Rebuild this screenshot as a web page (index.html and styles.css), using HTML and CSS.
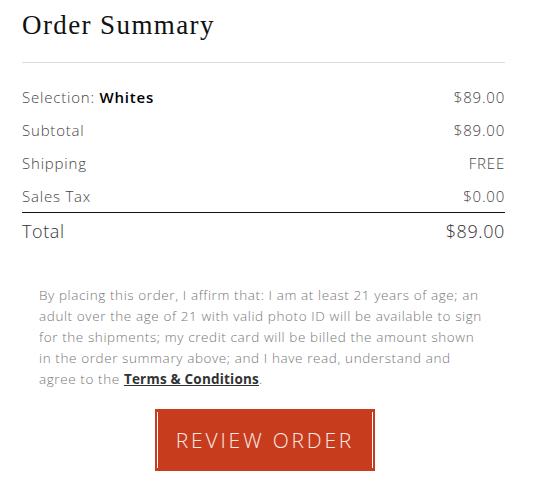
FILE: index.html
```html
<!DOCTYPE html>
<html>
<head>
<meta charset="utf-8">
<link rel="stylesheet" href="styles.css">
</head>
<body>
<div class="summary">
  <h1 class="title">Order Summary</h1>
  <div class="rows">
    <div class="row"><span>Selection: <b class="sel">Whites</b></span><span>$89.00</span></div>
    <div class="row"><span>Subtotal</span><span>$89.00</span></div>
    <div class="row"><span>Shipping</span><span>FREE</span></div>
    <div class="row"><span>Sales Tax</span><span>$0.00</span></div>
    <div class="row total"><span>Total</span><span>$89.00</span></div>
  </div>
  <p class="legal">By placing this order, I affirm that: I am at least 21 years of age; an adult over the age of 21 with valid photo ID will be available to sign for the shipments; my credit card will be billed the amount shown in the order summary above; and I have read, understand and agree to the <a class="terms" href="#">Terms &amp; Conditions</a>.</p>
  <div class="actions">
    <button class="review">REVIEW ORDER</button>
  </div>
</div>
</body>
</html>
```
FILE: styles.css
```css
* { box-sizing: border-box; }
body {
  margin: 0;
  background: #fff;
  font-family: "Open Sans", "Lato", sans-serif;
  font-weight: 300;
  color: #333;
}
.summary {
  width: 483px;
  margin-left: 22px;
  padding-top: 8px;
}
.title {
  margin: 0;
  font-family: "Liberation Serif", serif;
  font-weight: 400;
  font-size: 27px;
  letter-spacing: 1.4px;
  line-height: 34px;
  color: #111;
  padding-bottom: 20px;
  border-bottom: 1px solid #dcdcdc;
}
.rows { margin-top: 17px; }
.row {
  display: flex;
  justify-content: space-between;
  align-items: center;
  height: 33px;
  font-size: 15px;
  letter-spacing: 0.8px;
  color: #444;
}
.sel { font-weight: 600; color: #000; }
.row.total {
  border-top: 1px solid #111;
  height: 36px;
  font-size: 18px;
  letter-spacing: 0.6px;
  color: #333;
}
.legal {
  margin: 37px 0 0 17px;
  width: 447px;
  font-size: 13.5px;
  letter-spacing: 0.6px;
  line-height: 21px;
  color: #777;
}
.terms {
  color: #333;
  font-weight: 700;
  letter-spacing: 0.2px;
  text-decoration: underline;
}
.actions {
  display: flex;
  justify-content: center;
  margin-top: 19px;
}
.review {
  position: relative;
  width: 220px;
  height: 62px;
  background: #c83c1e;
  border: none;
  color: #fbe9e4;
  font-family: "Open Sans", sans-serif;
  font-weight: 300;
  font-size: 21px;
  letter-spacing: 2.8px;
  margin-left: 3px;
  padding: 0;
}
.review::before {
  content: "";
  position: absolute;
  top: 3px;
  bottom: 3px;
  left: 2px;
  right: 2px;
  border-left: 1px solid #fff;
  border-right: 1px solid #fff;
}
```
